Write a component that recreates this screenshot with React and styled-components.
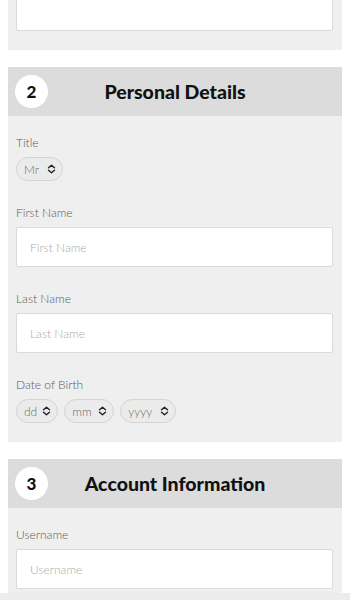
import React from "react";
import styled, { createGlobalStyle } from "styled-components";

const GlobalStyle = createGlobalStyle`
  html, body {
    margin: 0;
    padding: 0;
    background: #fff;
    font-family: Lato, "Open Sans", sans-serif;
  }
`;

const Page = styled.div`
  padding: 0 8px 20px;
  margin-top: -50px;
  display: flex;
  flex-direction: column;
  gap: 17px;
`;

const Section = styled.section`
  background: #efefef;
`;

const Header = styled.div`
  height: 49px;
  background: #dcdcdc;
  display: grid;
  grid-template-columns: 33px 1fr 33px;
  align-items: center;
  padding: 0 7px;
`;

const Step = styled.div`
  width: 33px;
  height: 33px;
  border-radius: 50%;
  background: #fff;
  display: flex;
  align-items: center;
  justify-content: center;
  font-weight: 900;
  font-size: 17px;
  color: #111;
`;

const Heading = styled.h2`
  margin: 0;
  text-align: center;
  font-weight: 900;
  font-size: 19.5px;
  color: #111;
`;

const Body = styled.div`
  padding: 18px 9px 19px 8px;
  display: flex;
  flex-direction: column;
  gap: 23px;
`;

const Field = styled.div`
  display: flex;
  flex-direction: column;
  gap: 5px;
`;

const Label = styled.label`
  font-size: 12px;
  font-weight: 300;
  line-height: 18px;
  color: #5a5a5a;
`;

const Input = styled.input`
  box-sizing: border-box;
  width: 100%;
  height: 40px;
  border: 1px solid #dadada;
  border-radius: 2px;
  background: #fff;
  padding: 0 13px;
  font-family: inherit;
  font-size: 12px;
  font-weight: 300;
  outline: none;

  &::placeholder {
    color: #aaa;
  }
`;

const Row = styled.div`
  display: flex;
  gap: 6px;
`;

const Pill = styled.div`
  box-sizing: border-box;
  height: 24px;
  padding: 0 6px 0 7px;
  min-width: ${(p) => p.$w || "auto"};
  border: 1px solid #d4d4d4;
  border-radius: 12px;
  background: #ebebeb;
  display: inline-flex;
  align-items: center;
  justify-content: space-between;
  gap: 5px;
  font-size: 12px;
  font-weight: 300;
  color: #666;
`;

const Footer = styled.div`
  position: fixed;
  left: 0;
  right: 0;
  bottom: 0;
  height: 7px;
  background: #ececec;
`;

const Arrows = () => (
  <svg width="9" height="10" viewBox="0 0 9 10" fill="none">
    <path
      d="M1.5 3.8 L4.5 1.2 L7.5 3.8 M1.5 6.2 L4.5 8.8 L7.5 6.2"
      stroke="#222"
      strokeWidth="1.4"
      strokeLinecap="round"
      strokeLinejoin="round"
    />
  </svg>
);

const Select = ({ value, w }) => (
  <Pill $w={w}>
    <span>{value}</span>
    <Arrows />
  </Pill>
);

const TextField = ({ label, placeholder = label }) => (
  <Field>
    <Label>{label}</Label>
    <Input placeholder={placeholder} />
  </Field>
);

const App = () => (
  <>
    <GlobalStyle />
    <Page>
      <Section>
        <Body>
          <TextField label="Email" placeholder="" />
        </Body>
      </Section>

      <Section>
        <Header>
          <Step>2</Step>
          <Heading>Personal Details</Heading>
        </Header>
        <Body>
          <Field>
            <Label>Title</Label>
            <Row>
              <Select value="Mr" w="47px" />
            </Row>
          </Field>
          <TextField label="First Name" />
          <TextField label="Last Name" />
          <Field>
            <Label>Date of Birth</Label>
            <Row>
              <Select value="dd" w="42px" />
              <Select value="mm" w="50px" />
              <Select value="yyyy" w="56px" />
            </Row>
          </Field>
        </Body>
      </Section>

      <Section>
        <Header>
          <Step>3</Step>
          <Heading>Account Information</Heading>
        </Header>
        <Body>
          <TextField label="Username" />
          <TextField label="Password" />
        </Body>
      </Section>
    </Page>
    <Footer />
  </>
);

export default App;
